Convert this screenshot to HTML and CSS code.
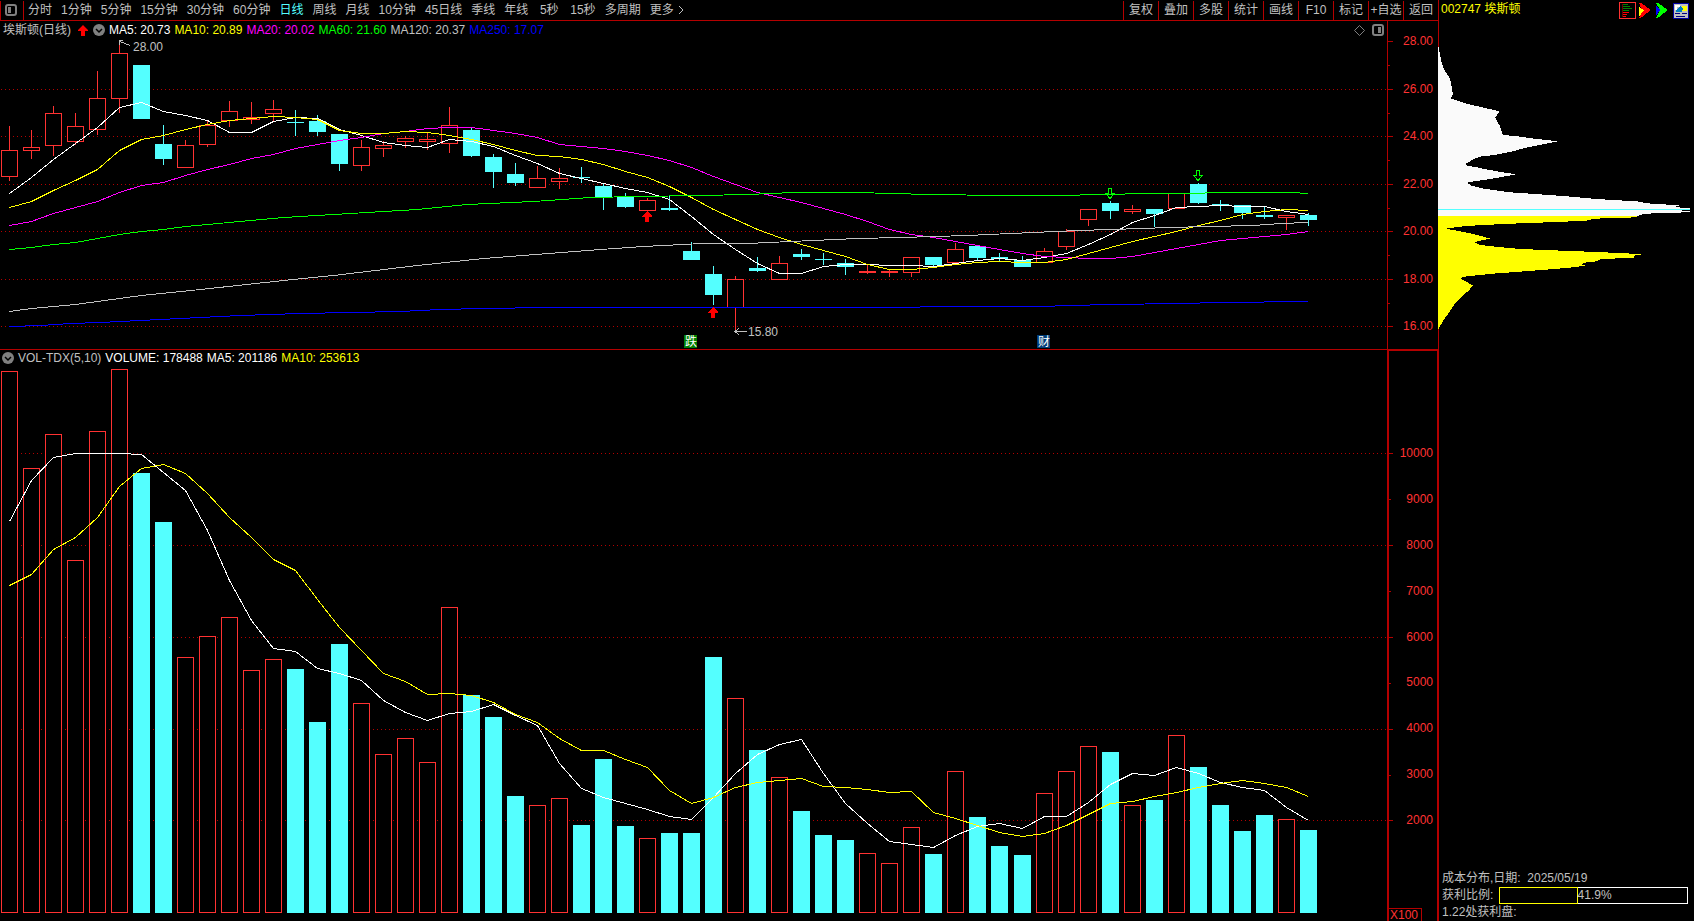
FILE: index.html
```html
<!DOCTYPE html>
<html lang="zh-CN">
<head>
    <meta charset="UTF-8">
    <meta name="viewport" content="width=device-width, initial-scale=1.0">
    <title>002747 埃斯顿</title>
    <link rel="stylesheet" href="styles.css">
    <script src="script.js" defer></script>
</head>
<body>
    <div class="terminal">
        <!-- Charts -->
        <main class="main">
            <nav class="toolbar">
                <button class="layout-toggle" aria-label="布局">
                    <svg width="12" height="12" viewBox="0 0 12 12">
                        <rect x="1" y="1" width="10" height="10" rx="2" fill="none" stroke="#808080" stroke-width="2"/>
                        <rect x="3" y="3" width="3" height="6" fill="#808080"/>
                    </svg>
                </button>
                <div class="periods">
                    <button>分时</button>
                    <button>1分钟</button>
                    <button>5分钟</button>
                    <button>15分钟</button>
                    <button>30分钟</button>
                    <button>60分钟</button>
                    <button class="active">日线</button>
                    <button>周线</button>
                    <button>月线</button>
                    <button>10分钟</button>
                    <button>45日线</button>
                    <button>季线</button>
                    <button>年线</button>
                    <button>5秒</button>
                    <button>15秒</button>
                    <button>多周期</button>
                    <button class="more">更多
                        <svg width="6" height="10" viewBox="0 0 6 10"><path d="M1 1l4 4-4 4" fill="none" stroke="#c0c0c0"/></svg>
                    </button>
                </div>
                <div class="actions">
                    <button>复权</button>
                    <button>叠加</button>
                    <button>多股</button>
                    <button>统计</button>
                    <button>画线</button>
                    <button>F10</button>
                    <button>标记</button>
                    <button>+自选</button>
                    <button>返回</button>
                </div>
            </nav>

            <!-- Price -->
            <section class="panel price">
                <div class="plot">
                    <div class="legend">
                        <span class="name">埃斯顿(日线)</span>
                        <svg class="up-arrow" width="10" height="11" viewBox="0 0 10 11"><path d="M5 0l5 5v1H7v5H3V6H0V5z" fill="#f00"/></svg>
                        <button class="fold" aria-label="收起">
                            <svg width="12" height="12" viewBox="0 0 12 12"><circle cx="6" cy="6" r="6" fill="#808080"/><path d="M3 5l3 3 3-3" fill="none" stroke="#000" stroke-width="1.5"/></svg>
                        </button>
                        <span class="c-white">MA5: 20.73</span>
                        <span class="c-yellow">MA10: 20.89</span>
                        <span class="c-magenta">MA20: 20.02</span>
                        <span class="c-green">MA60: 21.60</span>
                        <span>MA120: 20.37</span>
                        <span class="c-blue">MA250: 17.07</span>
                        <span class="corner">
                            <svg width="11" height="11" viewBox="0 0 11 11"><path d="M5.500 .5l5 5-5 5-5-5z" fill="none" stroke="#808080"/></svg>
                            <svg width="12" height="12" viewBox="0 0 12 12"><rect x="1" y="1" width="10" height="10" rx="2" fill="none" stroke="#808080" stroke-width="2"/><rect x="6" y="3" width="3" height="6" fill="#808080"/></svg>
                        </span>
                    </div>
                    <svg class="chart" id="price-chart" viewBox="0 41 1387 308" preserveAspectRatio="none"></svg>
                </div>
                <div class="axis">
                    <svg class="ticks" viewBox="0 21 6 328" preserveAspectRatio="none">
                        <path d="M0 41.500h5M0 89.500h5M0 136.500h5M0 184.500h5M0 231.500h5M0 279.500h5M0 326.500h5M0 65.500h2M0 113.500h2M0 160.500h2M0 208.500h2M0 255.500h2M0 303.500h2"/>
                    </svg>
                    <ul>
                        <li>28.00</li>
                        <li>26.00</li>
                        <li>24.00</li>
                        <li>22.00</li>
                        <li>20.00</li>
                        <li>18.00</li>
                        <li>16.00</li>
                    </ul>
                </div>
            </section>

            <!-- Volume -->
            <section class="panel volume">
                <div class="plot">
                    <div class="legend">
                        <button class="fold" aria-label="收起">
                            <svg width="12" height="12" viewBox="0 0 12 12"><circle cx="6" cy="6" r="6" fill="#808080"/><path d="M3 5l3 3 3-3" fill="none" stroke="#000" stroke-width="1.5"/></svg>
                        </button>
                        <span class="name">VOL-TDX(5,10)</span>
                        <span class="c-white">VOLUME: 178488</span>
                        <span class="c-white">MA5: 201186</span>
                        <span class="c-yellow">MA10: 253613</span>
                    </div>
                    <svg class="chart" id="volume-chart" viewBox="0 369 1387 552" preserveAspectRatio="none"></svg>
                </div>
                <div class="axis">
                    <svg class="ticks" viewBox="0 351 6 570" preserveAspectRatio="none">
                        <path d="M0 453.500h4M0 545.500h4M0 637.500h4M0 729.500h4M0 820.500h4M0 499.500h2M0 591.500h2M0 683.500h2M0 775.500h2"/>
                    </svg>
                    <ul>
                        <li>10000</li>
                        <li>9000</li>
                        <li>8000</li>
                        <li>7000</li>
                        <li>6000</li>
                        <li>5000</li>
                        <li>4000</li>
                        <li>3000</li>
                        <li>2000</li>
                    </ul>
                    <span class="unit">X100</span>
                </div>
            </section>
        </main>

        <!-- Cost distribution -->
        <aside class="side">
            <header class="side-header">
                <h1>002747 埃斯顿</h1>
                <div class="side-tools">
                    <button aria-label="筹码分布">
                        <svg width="17" height="17" viewBox="0 0 17 17" shape-rendering="crispEdges">
                            <rect x=".5" y=".5" width="16" height="16" fill="none" stroke="#ff3232"/>
                            <path d="M4 2.500h5M4 4.500h7M4 6.500h9M4 8.500h6" stroke="#008000"/>
                            <path d="M4 10.500h6M4 12.500h4M4 14.500h3" stroke="#f00"/>
                            <path d="M3.500 2v13" stroke="#600"/>
                        </svg>
                    </button>
                    <button aria-label="火焰山">
                        <svg width="12" height="15" viewBox="0 0 12 15" shape-rendering="crispEdges"><path d="M0 0h2l10 7-9 7-3 1 3-7z" fill="#f00"/><path d="M0 4l5 3-5 7z" fill="#ff0"/></svg>
                    </button>
                    <button aria-label="活跃度">
                        <svg width="12" height="15" viewBox="0 0 12 15" shape-rendering="crispEdges"><path d="M0 0h2l10 7-9 7-3 1 4-8z" fill="#0f0"/><path d="M0 2l4 5-4 6z" fill="#00f"/></svg>
                    </button>
                    <button aria-label="设置">
                        <svg width="16" height="16" viewBox="0 0 16 16" shape-rendering="crispEdges">
                            <rect width="16" height="16" fill="#0000a0"/>
                            <rect x="1" y="1" width="14" height="14" fill="#c0c0c0"/>
                            <rect x="9" y="3" width="5" height="5" fill="#ff0"/>
                            <path d="M2 2h5v2H4v3H2z" fill="#fff"/>
                            <path d="M3 8l4-5 3 2-1 4H3z" fill="#0080c0"/>
                            <path d="M2 10.500h5M9 10.500h5M3 13.500h9" stroke="#000080"/>
                        </svg>
                    </button>
                </div>
            </header>
            <svg class="distribution" viewBox="174 -27 768 984" preserveAspectRatio="none">
                <path fill="#fafafa" d="M174 48L177 56 181 80 187 105 193 120 207 140 212 155 217 180 218 193 213 205 235 213 255 220 290 228 333 238 360 245 354 250 346 262 350 272 358 285 364 300 368 315 405 318 440 323 480 328 534 334 505 340 470 347 430 355 395 365 345 375 300 380 280 388 259 400 258 406 290 412 330 420 375 428 408 433 370 440 330 447 275 455 262 458 272 466 305 475 390 487 480 493 560 499 650 507 770 514 800 520 900 526 882 531 932 535 903 541 932 545 920 547 800 551 780 555 774 558H174z"/>
                <path fill="#ff0" d="M174 558H774L768 562 645 566 620 572 530 576 420 580 330 584 260 588 225 592 198 596 230 602 280 612 310 620 332 626 300 632 285 637 300 645 355 651 420 657 520 661 625 665 740 670 785 673 757 678 773 682 715 685 660 688 650 694 620 697 603 703 615 707 580 712 500 719 420 725 340 731 260 739 240 744 250 750 278 766 268 780 245 800 222 825 205 850 188 875 175 897H174z"/>
                <path d="M174 538.500H930" stroke="#54ffff" stroke-width="3"/>
            </svg>
            <footer class="stats">
                <p>成本分布,日期: &nbsp;2025/05/19</p>
                <div class="profit">
                    <span>获利比例:</span>
                    <div class="profit-bar">
                        <div class="profit-fill" style="width: 41.9%"></div>
                        <span>41.9%</span>
                    </div>
                </div>
                <p>1.22处获利盘:</p>
            </footer>
        </aside>
    </div>
</body>
</html>
```

FILE: styles.css
```css
* {
    margin: 0;
    padding: 0;
    box-sizing: border-box;
}

body {
    font-family: "Liberation Sans", "Noto Sans CJK SC", sans-serif;
    font-size: 12px;
    line-height: 16px;
    background: #000;
    color: #c0c0c0;
    height: 100vh;
    overflow: hidden;
}

button {
    font: inherit;
    color: inherit;
    background: none;
    border: none;
    cursor: pointer;
    white-space: nowrap;
}

button:hover {
    color: #fff;
}

svg {
    display: block;
}

.terminal {
    display: grid;
    grid-template-columns: 1fr 256px;
    height: 100vh;
}

.main {
    display: flex;
    flex-direction: column;
    min-width: 0;
}

/* Toolbar */
.toolbar {
    display: flex;
    flex: none;
    height: 21px;
    padding-top: 1px;
    border-bottom: 1px solid #b40000;
}

.toolbar button {
    padding-bottom: 2px;
}

.toolbar .layout-toggle {
    width: 24px;
    padding: 0 5px 2px 4px;
    border-left: 1px solid #b40000;
    border-right: 1px solid #b40000;
}

.periods {
    display: flex;
    gap: 9px;
    padding-left: 4px;
}

.periods button {
    min-width: 24px;
}

.periods .active {
    color: #54ffff;
}

.periods .more {
    display: flex;
    align-items: center;
    gap: 4px;
}

.actions {
    display: flex;
    margin-left: auto;
}

.actions button {
    width: 35px;
    border-left: 1px solid #b40000;
}

/* Chart panels */
.panel {
    display: flex;
    min-height: 0;
}

.price {
    flex: 328 1 0;
}

.volume {
    flex: 572 1 0;
}

.plot {
    display: flex;
    flex: 1;
    flex-direction: column;
    min-width: 0;
}

.volume .plot {
    border-top: 1px solid #b40000;
}

.legend {
    display: flex;
    align-items: center;
    flex: none;
    gap: 4px;
    height: 20px;
    padding: 0 0 2px 3px;
    white-space: nowrap;
}

.volume .legend {
    height: 19px;
    padding: 0 0 3px 2px;
}

.up-arrow {
    margin: 0 1px 0 3px;
}

.corner {
    display: flex;
    align-items: center;
    gap: 7px;
    margin-left: auto;
    padding-right: 3px;
}

.c-white { color: #fff; }
.c-yellow { color: #ff0; }
.c-magenta { color: #f0f; }
.c-green { color: #0f0; }
.c-blue { color: #00f; }

.chart {
    flex: 1;
    width: 100%;
    min-height: 0;
    overflow: visible;
    shape-rendering: crispEdges;
}

.chart text {
    font-size: 12px;
    fill: #c0c0c0;
}

.chart .badge-text {
    fill: #fff;
}

.grid {
    stroke: #b40000;
    stroke-dasharray: 1 3;
}

.up {
    fill: #000;
    stroke: #ff3232;
}

.down {
    fill: #54ffff;
    stroke: #54ffff;
}

.line {
    fill: none;
}

/* Axis */
.axis {
    position: relative;
    width: 51px;
    border-left: 1px solid #b40000;
    color: #ff3232;
}

.volume .axis {
    border: 2px solid #b40000;
    border-width: 2px 1px 0 2px;
}

.axis ul {
    display: flex;
    flex-direction: column;
    justify-content: space-between;
    height: 100%;
    padding: 12px 5px 15px 0;
    list-style: none;
    text-align: right;
}

.volume .axis ul {
    padding: 94px 4px 93px 0;
}

.ticks {
    position: absolute;
    top: 0;
    left: 0;
    width: 6px;
    height: 100%;
    stroke: #b40000;
    shape-rendering: crispEdges;
}

.unit {
    position: absolute;
    left: 0;
    bottom: 0;
    padding: 0 3px 0 1px;
    height: 13px;
    line-height: 13px;
    border-top: 1px solid #b40000;
    border-right: 1px solid #b40000;
}

/* Side panel */
.side {
    display: flex;
    flex-direction: column;
    border-left: 1px solid #b40000;
}

.side-header {
    display: flex;
    justify-content: space-between;
    align-items: flex-start;
    flex: none;
    height: 21px;
    padding: 1px 5px 0 2px;
}

.side-header h1 {
    font-size: 12px;
    font-weight: normal;
    color: #ff0;
}

.side-tools {
    display: flex;
    align-items: center;
    gap: 5px;
    padding-top: 1px;
}

.side-tools button:first-child {
    margin-right: -2px;
}

.distribution {
    flex: 328 1 0;
    width: 256px;
    min-height: 0;
    margin-left: -1px;
    shape-rendering: crispEdges;
}

.stats {
    display: flex;
    flex: 572 1 0;
    flex-direction: column;
    justify-content: flex-end;
    line-height: 17px;
    padding: 0 6px 0 3px;
}

.profit {
    display: flex;
    align-items: center;
    gap: 6px;
    height: 17px;
}

.profit-bar {
    display: flex;
    align-items: center;
    flex: 1;
    height: 17px;
    border: 1px solid #fff;
}

.profit-fill {
    height: 17px;
    margin-left: -1px;
    border: 1px solid #ff0;
}
```

FILE: script.js
```javascript
const STEP = 22.011;
const FIRST = 9;
const BASELINE = 912;

// [high, body top, body bottom, low, direction, volume top]
const bars = [
    [126, 150, 176, 180, 1, 371], [130, 147, 150, 158, 1, 468], [106, 113, 145, 155, 1, 434],
    [113, 126, 141, 144, 1, 560], [71, 98, 129, 134, 1, 431], [41, 53, 98, 112, 1, 369],
    [65, 65, 118, 118, 0, 473], [125, 144, 158, 164, 0, 522], [140, 145, 167, 167, 1, 657],
    [121, 125, 144, 146, 1, 636], [101, 111, 120, 126, 1, 617], [102, 117, 119, 123, 1, 670],
    [100, 109, 113, 120, 1, 659], [110, 122, 122, 135, 0, 669], [115, 121, 131, 135, 0, 722],
    [134, 134, 163, 170, 0, 644], [140, 147, 165, 170, 1, 703], [141, 145, 148, 156, 1, 754],
    [136, 138, 141, 147, 1, 738], [132, 139, 141, 149, 1, 762], [107, 125, 143, 152, 1, 607],
    [128, 130, 155, 156, 0, 695], [154, 157, 171, 187, 0, 717], [163, 174, 182, 185, 0, 796],
    [166, 178, 187, 187, 1, 805], [168, 178, 181, 188, 1, 798], [167, 177, 177, 182, 0, 825],
    [183, 186, 196, 209, 0, 759], [193, 196, 206, 207, 0, 826], [198, 200, 210, 210, 1, 838],
    [195, 208, 209, 210, 0, 833], [242, 251, 259, 259, 0, 833], [266, 274, 294, 304, 0, 657],
    [276, 279, 307, 331, 1, 698], [257, 268, 270, 271, 0, 750], [256, 263, 279, 279, 1, 777],
    [249, 254, 256, 259, 0, 811], [253, 259, 259, 264, 0, 835], [259, 263, 266, 274, 0, 840],
    [264, 271, 272, 273, 1, 853], [269, 271, 272, 276, 1, 863], [257, 257, 272, 276, 1, 827],
    [257, 257, 264, 266, 0, 854], [243, 249, 262, 262, 1, 771], [245, 246, 257, 260, 0, 817],
    [253, 257, 258, 261, 0, 846], [256, 260, 266, 266, 0, 855], [248, 251, 262, 262, 1, 793],
    [229, 231, 246, 249, 1, 771], [209, 209, 219, 225, 1, 746], [201, 203, 210, 218, 0, 752],
    [205, 209, 211, 213, 1, 805], [209, 209, 213, 226, 0, 800], [193, 193, 208, 208, 1, 735],
    [183, 184, 202, 203, 0, 767], [200, 204, 205, 210, 0, 805], [205, 205, 212, 218, 0, 831],
    [207, 215, 216, 218, 0, 815], [215, 215, 217, 229, 1, 819], [213, 215, 219, 225, 0, 830]
];

const priceLines = {
    '#ffffff': [193, 177, 159, 143, 127, 107, 102, 111, 115, 120, 132, 132, 121, 117, 118, 129, 135, 142, 145, 147,
        139, 141, 146, 155, 163, 173, 178, 183, 188, 192, 199, 216, 234, 249, 263, 273, 273, 266, 264, 264,
        265, 265, 266, 263, 260, 258, 260, 257, 253, 244, 234, 222, 215, 207, 206, 205, 206, 206, 211, 214],
    '#ff00ff': [225, 221, 213, 207, 201, 192, 185, 182, 175, 169, 164, 158, 154, 148, 144, 140, 137, 133, 131, 128,
        127, 127, 130, 133, 137, 144, 146, 148, 151, 155, 160, 167, 176, 184, 192, 197, 202, 208, 214, 221,
        229, 234, 237, 241, 245, 249, 253, 256, 257, 258, 258, 256, 252, 248, 244, 240, 238, 236, 234, 231],
    '#ffff00': [207, 201, 190, 180, 169, 150, 139, 135, 129, 124, 120, 118, 116, 117, 119, 130, 133, 133, 131, 132,
        135, 139, 144, 150, 155, 156, 159, 164, 171, 177, 186, 197, 209, 219, 229, 237, 244, 250, 256, 264,
        269, 269, 267, 264, 262, 261, 262, 262, 259, 253, 247, 241, 236, 231, 225, 220, 214, 211, 209, 210]
};

const volumeLines = {
    '#ffffff': [521, 480, 457, 453, 453, 453, 454, 472, 490, 530, 580, 620, 648, 651, 668, 673, 680, 700, 712, 720,
        713, 711, 704, 715, 725, 763, 788, 797, 803, 809, 816, 819, 797, 773, 754, 744, 739, 773, 803, 823,
        841, 844, 847, 835, 826, 823, 828, 816, 816, 802, 784, 773, 775, 767, 773, 782, 787, 790, 807, 820],
    '#ffff00': [585, 574, 549, 537, 517, 486, 468, 464, 473, 493, 517, 537, 559, 570, 599, 627, 650, 673, 681, 694,
        693, 695, 702, 714, 722, 738, 750, 750, 759, 767, 790, 803, 797, 787, 782, 780, 778, 786, 787, 789,
        792, 791, 812, 818, 825, 832, 836, 833, 825, 814, 803, 801, 796, 792, 787, 783, 780, 783, 787, 796]
};

// Slow averages only need a few points
const slowLines = {
    '#00ff00': '9,249 31,247 53,244 75,242 97,238 119,234 141,231 163,229 185,226 283,217 333,214 417,209 467,204 533,201 590,197 637,196 700,195 747,194 793,192 857,192 890,193 930,194 1000,195 1060,195 1100,194 1150,193 1190,193 1220,192 1290,192 1308,193',
    '#c0c0c0': '9,311 31,308 75,304 119,298 141,295 200,289 283,280 333,275 417,265 483,258 600,249 643,246 702,243 747,243 790,241 857,238 900,237 967,235 1010,233 1078,230 1142,228 1167,227 1209,226 1253,225 1280,223 1308,222',
    '#0000ff': '9,326 40,325 70,323 100,322 140,320 200,317 240,315 300,313 400,311 440,309 482,308 548,307 910,307 930,306 1040,306 1070,305 1110,304 1180,303 1220,302 1308,301'
};

const barX = i => Math.round(FIRST + i * STEP);

function gridLine(y) {
    return `<path class="grid" d="M1 ${y + 0.5}H1387"/>`;
}

function polyline(points, color) {
    return `<polyline class="line" stroke="${color}" points="${points}"/>`;
}

function series(values, color) {
    return polyline(values.map((y, i) => `${barX(i) + 0.5},${y + 0.5}`).join(' '), color);
}

function box(x, top, bottom, up) {
    const cls = up ? 'up' : 'down';
    return `<rect class="${cls}" x="${x - 7.5}" y="${top + 0.5}" width="16" height="${bottom - top}"/>`;
}

function candle([high, top, bottom, low, up], i) {
    const x = barX(i);
    const cls = up ? 'up' : 'down';
    const wick = `<path class="${cls}" d="M${x + 0.5} ${high}V${top}M${x + 0.5} ${bottom + 1}V${low + 1}"/>`;
    // a flat body is a single stroke
    const body = top === bottom
        ? `<path class="${cls}" d="M${x - 8} ${top + 0.5}h17"/>`
        : box(x, top, bottom, up);
    return wick + body;
}

function redArrow(x, y) {
    return `<path fill="#f00" d="M${x} ${y}l5 5v1h-3v5h-4v-5h-3v-1z"/>`;
}

function greenArrow(x, y) {
    return `<path fill="none" stroke="#0f0" d="M${x - 1.5} ${y + 0.5}h3v5h3l-4.500 5-4.500-5h3z"/>`;
}

function badge(x, y, text, color) {
    return `<rect x="${x}" y="${y}" width="13" height="13" fill="${color}"/>` +
        `<text class="badge-text" x="${x + 1}" y="${y + 11}">${text}</text>`;
}

document.getElementById('price-chart').innerHTML =
    [89, 136, 184, 231, 279, 326].map(gridLine).join('') +
    bars.map(candle).join('') +
    Object.entries(priceLines).map(([color, v]) => series(v, color)).join('') +
    Object.entries(slowLines).map(([color, p]) => polyline(p.replace(/(\d+),(\d+)/g, '$1.5,$2.5'), color)).join('') +
    '<path class="line" stroke="#c0c0c0" d="M123 40.500h-3.500v4M119.500 41.500l11 4"/>' +
    '<text x="133" y="51">28.00</text>' +
    '<path class="line" stroke="#c0c0c0" d="M747 331.500h-12M739 328l-4 3.500 4 3.500"/>' +
    '<text x="748" y="336">15.80</text>' +
    redArrow(647, 211) + redArrow(713, 307) +
    greenArrow(1110, 188) + greenArrow(1198, 170) +
    badge(684, 335, '跌', '#008000') + badge(1037, 335, '财', '#003c78');

document.getElementById('volume-chart').innerHTML =
    [453, 545, 637, 729, 820].map(gridLine).join('') +
    bars.map((bar, i) => box(barX(i), bar[5], BASELINE, bar[4])).join('') +
    Object.entries(volumeLines).map(([color, v]) => series(v, color)).join('');
```
